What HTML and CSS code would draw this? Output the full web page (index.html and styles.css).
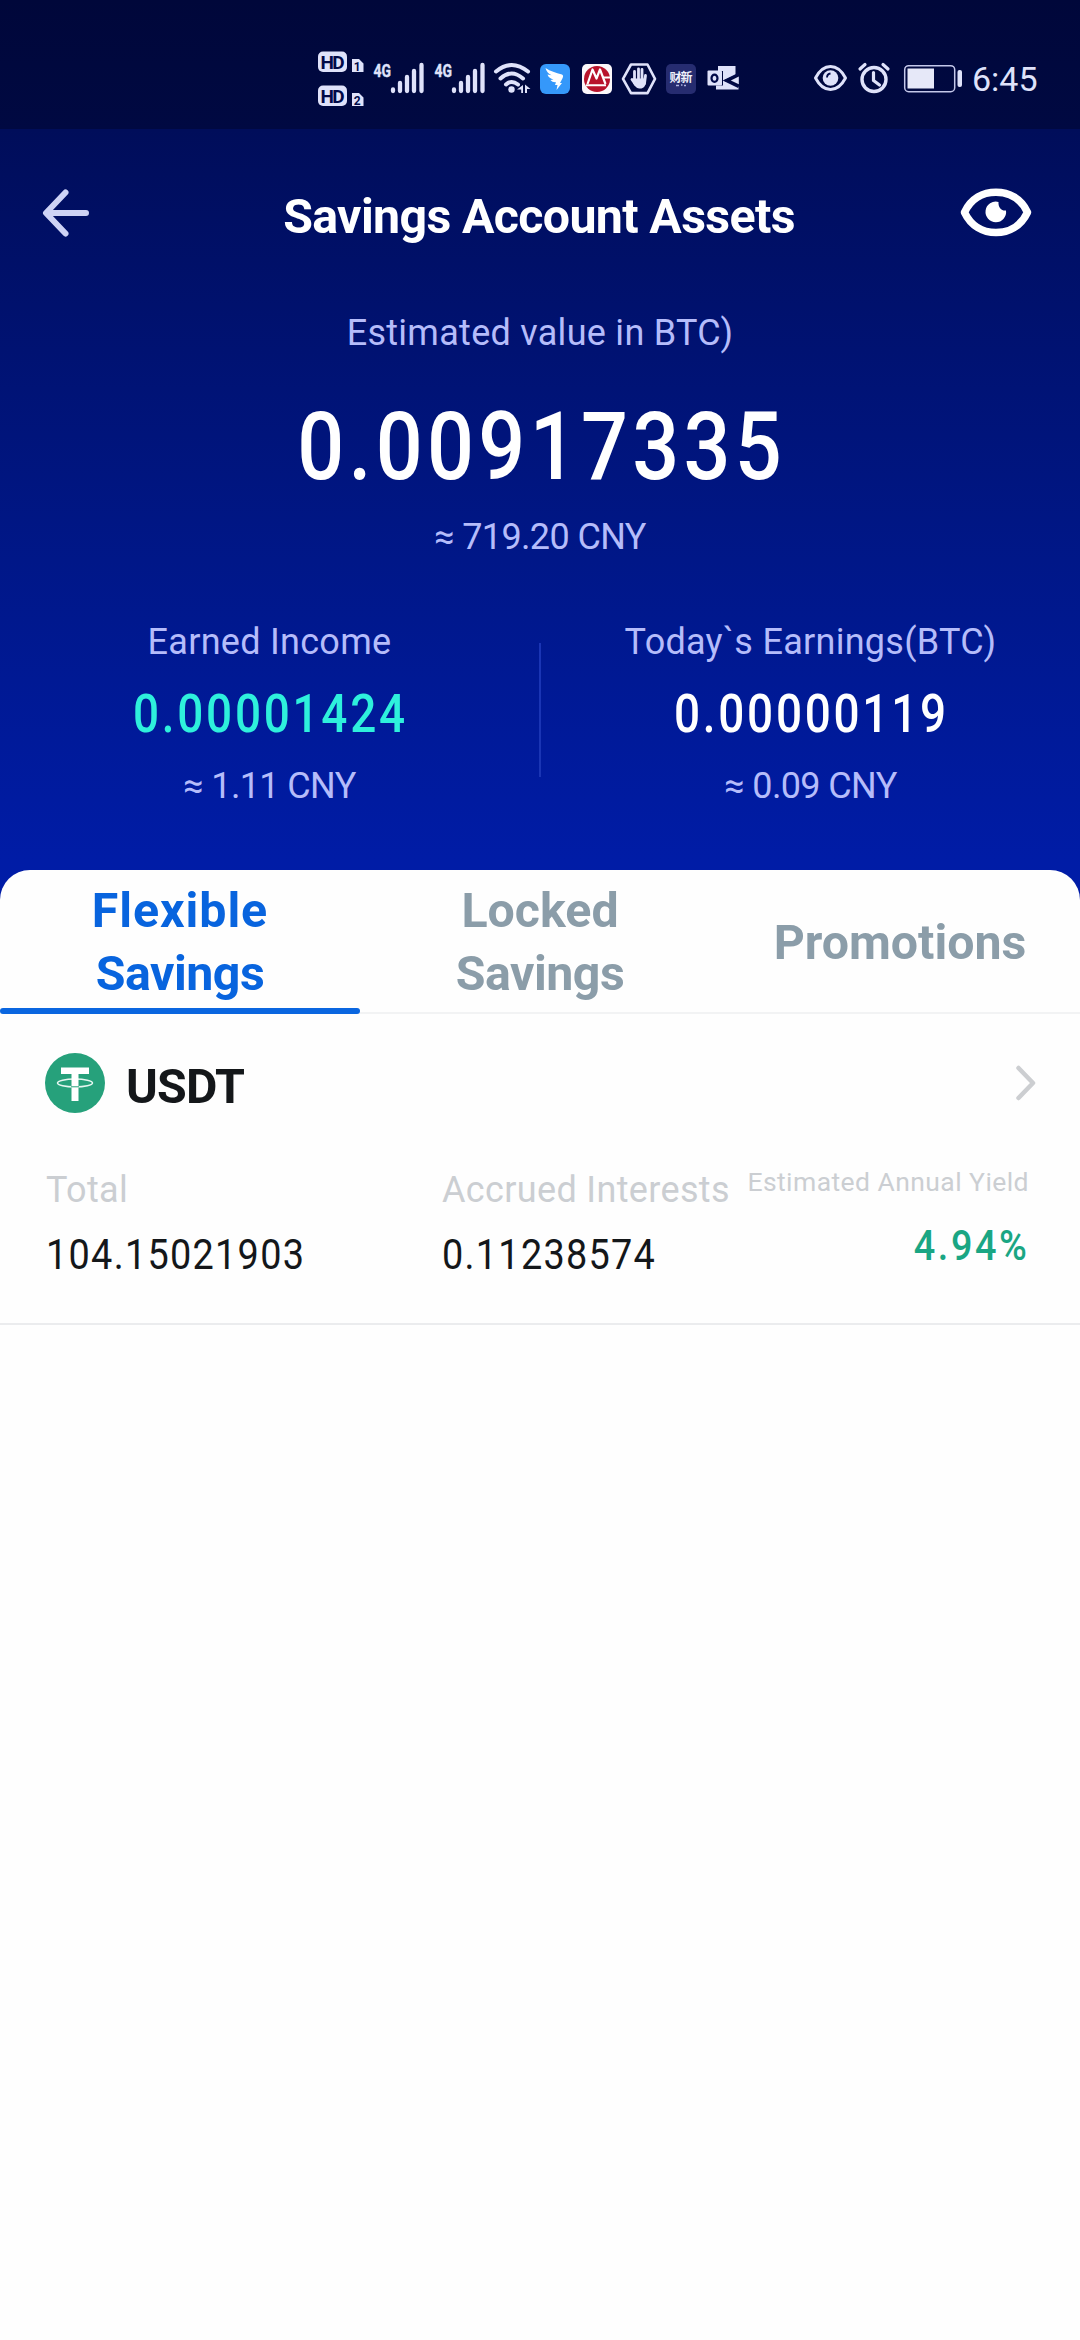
FILE: index.html
```html
<!DOCTYPE html>
<html lang="en">
<head>
<meta charset="utf-8">
<title>Savings Account Assets</title>
<link rel="stylesheet" href="styles.css">
</head>
<body>
<main class="screen">
  <div class="statusbar">
    <div class="status-group">
      <svg width="50" height="60" viewBox="316 49 50 60">
        <rect x="318" y="51.5" width="29" height="20.5" rx="5" fill="#dfe2fa"/>
        <rect x="318" y="85.500" width="29" height="20.5" rx="5" fill="#dfe2fa"/>
        <path d="M352 59h7l4.500 4.500V72H352zM352 93h7l4.500 4.500V106H352z" fill="#dfe2fa"/>
        <g class="badge-text">
          <text x="332.500" y="68.500" font-size="19" textLength="24">HD</text>
          <text x="332.500" y="102.500" font-size="19" textLength="24">HD</text>
          <text x="357.300" y="70.500" font-size="12">1</text>
          <text x="357.300" y="104.500" font-size="12">2</text>
        </g>
      </svg>
      <svg width="61" height="60" viewBox="366 49 61 60">
        <text class="net" x="373.500" y="76.500" textLength="17.500" lengthAdjust="spacingAndGlyphs">4G</text>
        <path class="bars" d="M393 89.500v1.500M400 83v8M407 77v14M414 71v20M421.500 65v26"/>
      </svg>
      <svg width="61" height="60" viewBox="427 49 61 60">
        <text class="net" x="434.500" y="76.500" textLength="17.500" lengthAdjust="spacingAndGlyphs">4G</text>
        <path class="bars" d="M454 89.500v1.500M461 83v8M468 77v14M475 71v20M482.500 65v26"/>
      </svg>
      <svg width="46" height="60" viewBox="488 49 46 60">
        <path d="M496 71.500q15.500-13 32 0M500.500 78.500q11-10 22.500 0M506 84.500q5.500-5 12 0" fill="none" stroke="#dfe2fa" stroke-width="4" stroke-linecap="round"/>
        <circle cx="511.500" cy="89.500" r="3.200" fill="#dfe2fa"/>
        <path d="M523 85v8h-1.800v-3.500h-4.200zM525 84.500l5.500 4.500h-3.500v4h-2z" fill="#dfe2fa"/>
      </svg>
      <svg width="42" height="60" viewBox="534 49 42 60">
        <rect x="540" y="64" width="30" height="30" rx="6" fill="#3598fa"/>
        <path d="M545.500 68c5 3.500 10 4.500 16.500 6.500 1.500.6 1.300 2.600.4 4l-2.400 4.500h2l-5.500 7 1-5h-2.500l1-2.800c-2.500.2-4-.5-5.500-2.200l3-.6c-3-.5-5-2-6-4.900l4 .8c-3-1.600-5-3.300-6-7.300z" fill="#fff"/>
      </svg>
      <svg width="42" height="60" viewBox="576 49 42 60">
        <rect x="582" y="64" width="30" height="30" rx="5" fill="#fbf8fb"/>
        <circle cx="597" cy="79" r="13" fill="#b8132c"/>
        <path d="M587.500 84l5-14.500 4 9 3.500-9 5.500 14.500" stroke="#fff" stroke-width="2.200" fill="none" stroke-linejoin="round"/>
        <path d="M586 85.200h20M603 77.500h8" stroke="#fff" stroke-width="2"/>
      </svg>
      <svg width="44" height="60" viewBox="618 49 44 60">
        <path d="M631 64.500h16.500l7.500 14.300-7.500 14.300H631l-8-14.300z" fill="none" stroke="#dfe2fa" stroke-width="2.600" stroke-linejoin="round"/>
        <path d="M634.500 71.500v11M638.500 68.800v12M642 69.500v12M632 79.500l3.500 5M645.500 75.500l-1 8" fill="none" stroke="#dfe2fa" stroke-width="2.800" stroke-linecap="round"/>
        <path d="M633.200 78.500h12.500v3.500c0 4-2 6.500-5.500 6.500-3 0-4.500-1-7-5z" fill="#dfe2fa"/>
      </svg>
      <svg width="40" height="60" viewBox="662 49 40 60">
        <rect x="666" y="64" width="30" height="30" rx="5" fill="#262c70"/>
        <text class="caixin" x="681" y="81.500" textLength="23">财新</text>
        <path d="M676 85.500h3M681 85h1.500M684 85.500h2" stroke="#aeb3e0" stroke-width="1.500"/>
      </svg>
      <svg width="42" height="60" viewBox="702 49 42 60">
        <path d="M718 66h17.500v9l-12 5.500 15 6v3h-22.500v-4h7V71H718z" fill="#dfe2fa"/>
        <rect x="707.500" y="70.500" width="14.500" height="15" rx="1" fill="#dfe2fa"/>
        <ellipse cx="714.500" cy="78.200" rx="3" ry="3.600" fill="none" stroke="#020a48" stroke-width="2.200"/>
        <path d="M738.500 74l-13.500 6.500 13.500 6.500" fill="none" stroke="#020a48" stroke-width="2"/>
        <path d="M738.800 76.500l-8 4 8 3.800z" fill="#dfe2fa"/>
      </svg>
    </div>
    <div class="status-group">
      <svg width="44" height="60" viewBox="808 49 44 60">
        <path d="M815.500 78q6-11.500 15-11.500t15 11.500q-6 11.500-15 11.500t-15-11.500z" fill="none" stroke="#dfe2fa" stroke-width="3" stroke-linejoin="round"/>
        <circle cx="830.500" cy="78" r="7.800" fill="#dfe2fa"/>
        <path d="M827 77.500q0-3.500 3.500-4" fill="none" stroke="#020a48" stroke-width="1.800"/>
      </svg>
      <svg width="46" height="60" viewBox="852 49 46 60">
        <circle cx="874" cy="79.500" r="12" fill="none" stroke="#dfe2fa" stroke-width="3.400"/>
        <path d="M860 69l5-4.500M888 69l-5-4.500M873.500 72.500v8l6 4.500" fill="none" stroke="#dfe2fa" stroke-width="3.200" stroke-linecap="round"/>
      </svg>
      <svg width="74" height="60" viewBox="898 49 74 60">
        <rect x="904.700" y="65.700" width="50" height="26" rx="4" fill="none" stroke="#c4c8ea" stroke-width="1.500"/>
        <rect x="907.500" y="68.500" width="26.500" height="20" fill="#e6e8f8"/>
        <rect x="957.500" y="70" width="4.500" height="17" rx="2" fill="#dfe2fa"/>
      </svg>
      <span class="clock">6:45</span>
    </div>
  </div>

  <header class="navbar">
    <svg width="50" height="52" viewBox="41 190 50 52">
      <path d="M65.500 195.500L46 216l19.500 20.500M47 216h39" fill="none" stroke="#ced3f5" stroke-width="6" stroke-linecap="round" stroke-linejoin="round"/>
    </svg>
    <h1 class="title">Savings Account Assets</h1>
    <svg width="72" height="52" viewBox="960 190 72 52">
      <path d="M964.500 215.300C971 201.500 983 195.200 996 195.200s25 6.300 31.500 20.100C1021 229 1009 235.500 996 235.500s-25-6.500-31.500-20.200z" fill="none" stroke="#fff" stroke-width="7.500" stroke-linejoin="round"/>
      <path d="M998.500 205a10.300 10.300 0 1 0 7.500 8.500c-4 .8-8-3-7.500-8.500z" fill="#fff"/>
    </svg>
  </header>

  <section class="summary">
    <p class="caption">Estimated value in BTC)</p>
    <p class="balance"><span class="balance-num">0.00917335</span></p>
    <p class="approx">≈ 719.20 CNY</p>
  </section>

  <section class="stats">
    <div class="stat">
      <p class="caption">Earned Income</p>
      <p class="amount earned"><span class="amount-num">0.00001424</span></p>
      <p class="approx">≈ 1.11 CNY</p>
    </div>
    <div class="divider"></div>
    <div class="stat">
      <p class="caption">Today`s Earnings(BTC)</p>
      <p class="amount"><span class="amount-num">0.00000119</span></p>
      <p class="approx">≈ 0.09 CNY</p>
    </div>
  </section>

  <section class="sheet">
    <nav class="tabs">
      <div class="tab active"><span class="flexible">Flexible</span><span class="savings">Savings</span></div>
      <div class="tab"><span>Locked</span><span class="savings">Savings</span></div>
      <div class="tab"><span>Promotions</span></div>
    </nav>
    <article class="asset">
      <div class="asset-head">
        <svg width="60" height="60" viewBox="0 0 60 60">
          <circle cx="30" cy="30" r="30" fill="#26a17b"/>
          <ellipse cx="30" cy="30" rx="17.500" ry="4" fill="none" stroke="#e4f6ef" stroke-width="1.500"/>
          <path d="M16 14.500h28v6.500H33.500v27h-7V21H16z" fill="#fff"/>
          <path d="M26 33.800h8" stroke="#26a17b" stroke-width="1"/>
        </svg>
        <h2 class="coin">USDT</h2>
        <svg width="24" height="40" viewBox="0 0 24 40">
          <path d="M4.500 5L19 20 4.500 35" fill="none" stroke="#ccced1" stroke-width="4.500" stroke-linecap="round" stroke-linejoin="round"/>
        </svg>
      </div>
      <div class="figures">
        <div class="figure total">
          <p class="label">Total</p>
          <p class="value"><span class="value-num">104.15021903</span></p>
        </div>
        <div class="figure interest">
          <p class="label">Accrued Interests</p>
          <p class="value"><span class="value-num">0.11238574</span></p>
        </div>
        <div class="figure yield">
          <p class="label small">Estimated Annual Yield</p>
          <p class="value green"><span class="value-num">4.94%</span></p>
        </div>
      </div>
    </article>
  </section>
</main>
</body>
</html>
```

FILE: styles.css
```css
* { box-sizing: border-box; }
body, p, h1, h2 { margin: 0; }
body {
  font-family: Roboto, "Liberation Sans", sans-serif;
  background: #fefefe;
}
.screen {
  display: flex;
  flex-direction: column;
  height: 2340px;
  background: linear-gradient(#000a50 0, #000d5a 130px, #001272 350px, #001788 560px, #001ca6 860px, #001ca8 910px, #fefefe 910px);
}
.statusbar {
  display: flex;
  justify-content: space-between;
  height: 129px;
  padding: 49px 42px 0 316px;
  background: linear-gradient(#00073a, #000942);
}
.status-group { display: flex; }
.status-group svg { display: block; }
.badge-text {
  font-family: Roboto, sans-serif;
  font-weight: 700;
  text-anchor: middle;
  fill: #020a48;
}
.net {
  font: 700 19px Roboto, sans-serif;
  fill: #dfe2fa;
  stroke: #dfe2fa;
  stroke-width: .4;
}
.bars { fill: none; stroke: #dfe2fa; stroke-width: 4.3; stroke-linecap: round; }
.caixin {
  font: 700 12px "Noto Sans CJK SC", sans-serif;
  text-anchor: middle;
  fill: #f0f1fb;
}
.clock {
  height: 60px;
  width: 66px;
  font-size: 34px;
  line-height: 60px;
  color: #dfe2fa;
}
.navbar {
  display: flex;
  justify-content: space-between;
  height: 179px;
  padding: 58px 48px 0 41px;
}
.title {
  margin-left: 27px;
  font-size: 48.3px;
  line-height: 60px;
  letter-spacing: -.64px;
  color: #fff;
}
.caption, .approx {
  font-size: 36px;
  line-height: 50px;
  color: #b5bcfa;
  text-align: center;
}
.caption { letter-spacing: .28px; }
.approx { letter-spacing: -.62px; }
.balance {
  margin: 39px 0 15px;
  font-size: 95px;
  line-height: 100px;
  font-weight: 500;
  color: #fff;
  text-align: center;
}
.balance-num {
  display: inline-block;
  padding-left: 4px;
  transform: scaleX(.87);
  letter-spacing: 4.95px;
}
.stats { display: flex; height: 253px; margin-top: 55px; }
.stat { flex: 1; }
.divider { width: 2px; height: 134px; margin-top: 26px; background: #1a35b4; }
.amount {
  margin: 17px 0;
  font-size: 54px;
  line-height: 60px;
  font-weight: 500;
  color: #fff;
  text-align: center;
}
.amount-num {
  display: inline-block;
  padding-left: 3px;
  transform: scaleX(.85);
  letter-spacing: 3.2px;
}
.earned { color: #2ef0dc; }
.sheet {
  flex: 1;
  background: #fefefe;
  border-radius: 30px 30px 0 0;
}
.tabs {
  display: flex;
  height: 144px;
  box-shadow: inset 0 -2px #f2f3f4;
}
.tab {
  flex: 1;
  display: flex;
  flex-direction: column;
  justify-content: center;
  align-items: center;
  font-size: 48.3px;
  line-height: 63px;
  font-weight: 700;
  color: #8b9da9;
}
.tab.active { position: relative; color: #0864de; }
.tab.active::after {
  content: "";
  position: absolute;
  left: 0;
  right: 0;
  bottom: 0;
  height: 6px;
  border-radius: 3px;
  background: #0a66e0;
}
.flexible { letter-spacing: .94px; }
.savings { letter-spacing: -.47px; }
.asset {
  height: 311px;
  border-bottom: 2px solid #ebecee;
}
.asset-head {
  display: flex;
  align-items: center;
  height: 138px;
  padding: 0 42px 0 45px;
}
.coin {
  margin: 7px auto 0 21px;
  font-size: 48.3px;
  line-height: 60px;
  letter-spacing: -.83px;
  color: #14171a;
}
.figures { display: flex; padding: 13px 51px 0 46px; }
.total { width: 396px; }
.interest { width: 298px; }
.label {
  font-size: 36px;
  line-height: 50px;
  letter-spacing: .35px;
  color: #cbced2;
  white-space: nowrap;
}
.label.small {
  margin-top: 1px;
  font-size: 26.5px;
  line-height: 32px;
  letter-spacing: .43px;
}
.value {
  margin-top: 9px;
  font-size: 43px;
  line-height: 60px;
  color: #14171a;
}
.value-num {
  display: inline-block;
  transform: scaleX(.88);
  transform-origin: left;
  letter-spacing: 1.45px;
}
.yield { flex: 1; text-align: right; }
.green { margin-top: 17px; color: #1aa683; font-weight: 500; }
.green .value-num { transform-origin: right; letter-spacing: 2.9px; }
```
